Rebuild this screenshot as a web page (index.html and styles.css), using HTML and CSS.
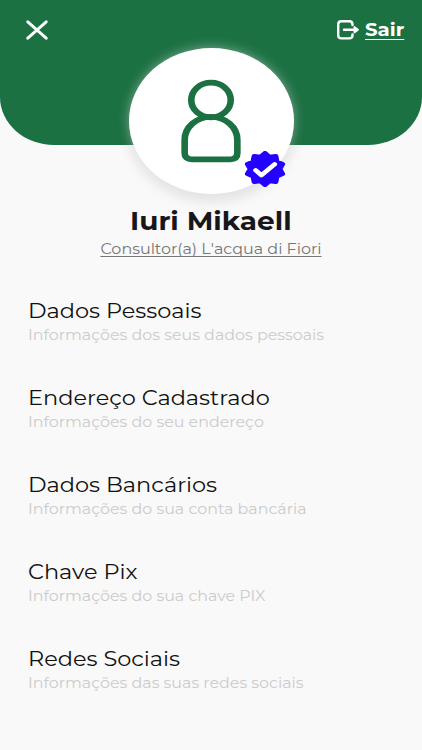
FILE: index.html
```html
<!doctype html>
<html lang="pt-BR">
<head>
    <meta charset="utf-8">
    <meta name="viewport" content="width=device-width, initial-scale=1">
    <title>Perfil</title>
    <link rel="stylesheet" href="styles.css">
</head>
<body>
    <header class="topbar">
        <a class="close" aria-label="Fechar">
            <svg width="22" height="20" viewBox="0 0 22 20"><path d="M1.8 1.8L20.2 18.2M20.2 1.8L1.8 18.2"/></svg>
        </a>
        <a class="logout">
            <svg width="23" height="20" viewBox="0 0 23 20">
                <path d="M15.5 5V4.4Q15.5 1.2 12.2 1.2H4.4Q1.2 1.2 1.2 4.4V15.2Q1.2 18.4 4.4 18.4H12.2Q15.5 18.4 15.5 15.2V14.4M7 9.8H18"/>
                <path class="arrow" d="M17.4 7V12.6L21 9.8Z"/>
            </svg>
            <span class="logout-text">Sair</span>
        </a>
    </header>

    <section class="profile">
        <div class="avatar">
            <svg class="person" viewBox="0 0 52.6 84" preserveAspectRatio="none">
                <circle cx="26.3" cy="21" r="17.3"/>
                <path d="M3.2 61A23.1 23.1 0 0 1 49.4 61V74Q49.4 80.3 43.1 80.3H9.5Q3.2 80.3 3.2 74Z"/>
            </svg>
            <svg class="badge" viewBox="-21 -21 42 42" preserveAspectRatio="none">
                <path class="seal" d="M0-18.5L4.57-14.08 10.87-14.97 11.97-8.7 17.6-5.72 14.8 0 17.6 5.72 11.97 8.7 10.87 14.97 4.57 14.08 0 18.5-4.57 14.08-10.87 14.97-11.97 8.7-17.6 5.72-14.8 0-17.6-5.72-11.97-8.7-10.87-14.97-4.57-14.08Z"/>
                <path class="check" d="M-9.3 1.5L-3.6 7.2 9.6-5.6"/>
            </svg>
        </div>
        <h1 class="name">Iuri Mikaell</h1>
        <a class="role">Consultor(a) L'acqua di Fiori</a>
    </section>

    <nav class="menu">
        <a class="item">
            <span class="title">Dados Pessoais</span>
            <span class="desc">Informações dos seus dados pessoais</span>
        </a>
        <a class="item">
            <span class="title">Endereço Cadastrado</span>
            <span class="desc">Informações do seu endereço</span>
        </a>
        <a class="item">
            <span class="title">Dados Bancários</span>
            <span class="desc">Informações do sua conta bancária</span>
        </a>
        <a class="item">
            <span class="title">Chave Pix</span>
            <span class="desc">Informações do sua chave PIX</span>
        </a>
        <a class="item">
            <span class="title">Redes Sociais</span>
            <span class="desc">Informações das suas redes sociais</span>
        </a>
    </nav>
</body>
</html>
```
FILE: styles.css
```css
* { margin: 0; padding: 0; box-sizing: border-box; }
body {
    font-family: Montserrat, Inter, "Liberation Sans", sans-serif;
    background-color: #f9f9f9;
    height: 750px;
    overflow: hidden;
}
svg { display: block; fill: none; stroke-linecap: round; stroke-linejoin: round; }

.topbar {
    display: flex;
    justify-content: space-between;
    align-items: flex-start;
    height: 144.5px;
    padding: 20px 18px 0 26px;
    background-color: #1c7143;
    border-radius: 0 0 54px 54px / 0 0 48px 48px;
}

.close svg { stroke: #fff; stroke-width: 2.9; }

.logout {
    display: flex;
    gap: 5px;
    color: #fff;
}

.logout svg { stroke: #fff; stroke-width: 2.4; }
.logout .arrow { fill: #fff; stroke-width: 1.8; }

.logout-text {
    width: 39px;
    font-size: 17.5px;
    font-weight: 700;
    line-height: 20px;
    white-space: nowrap;
    text-decoration: underline;
    text-decoration-thickness: 1px;
    text-underline-offset: 3px;
    transform: scaleX(1.13);
    transform-origin: left;
}

.profile {
    display: flex;
    flex-direction: column;
    align-items: center;
    margin-top: -96.5px;
}

.avatar {
    position: relative;
    display: flex;
    justify-content: center;
    width: 165px;
    height: 145.5px;
    padding-top: 31px;
    background-color: #fff;
    border-radius: 50%;
    box-shadow: 0 0 12px rgba(255, 255, 255, 0.45), 0 5px 14px rgba(0, 0, 0, 0.14);
}

.person { width: 60px; height: 84px; stroke: #1c7143; stroke-width: 5.8; }

.badge {
    position: absolute;
    left: 115px;
    top: 103px;
    width: 42px;
    height: 36px;
}

.seal { fill: #2400ff; stroke: #2400ff; stroke-width: 5; }
.check { stroke: #fff; stroke-width: 5; }

.name {
    margin-top: 11px;
    color: #17171a;
    font-size: 24.5px;
    font-weight: 700;
    line-height: 32px;
    transform: scaleX(1.14);
}

.role {
    margin-top: 2px;
    color: #767676;
    font-size: 14px;
    font-weight: 400;
    line-height: 20px;
    text-decoration: underline;
    text-decoration-thickness: 1px;
    text-underline-offset: 2px;
    text-decoration-skip-ink: none;
    transform: scaleX(1.14);
}

.menu {
    display: flex;
    flex-direction: column;
    gap: 38px;
    margin-top: 39px;
    padding-left: 28px;
}

.item {
    display: flex;
    flex-direction: column;
    align-items: flex-start;
    height: 49.1px;
}

.title, .desc {
    font-weight: 400;
    white-space: nowrap;
    transform: scaleX(1.135);
    transform-origin: left;
}

.title { color: #111; font-size: 19.8px; line-height: 26px; }
.desc { color: #cbcbcb; font-size: 14px; line-height: 22px; }
```
